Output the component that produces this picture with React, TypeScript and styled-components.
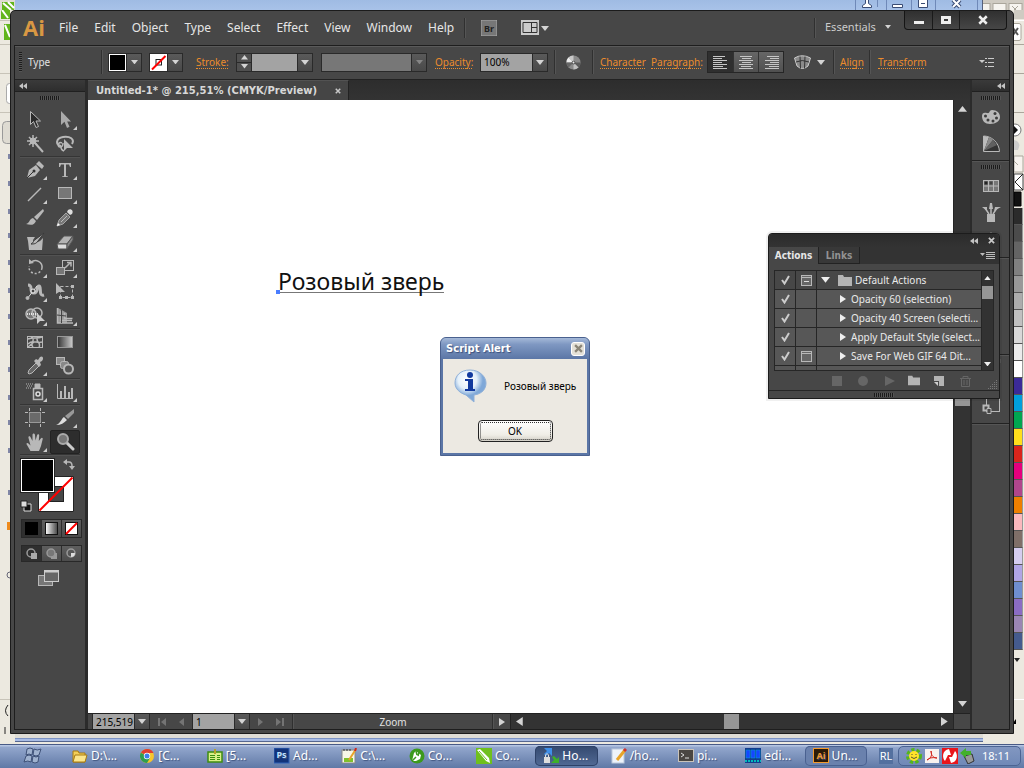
import React from "react";
import styled, { createGlobalStyle, css } from "styled-components";

const GlobalStyle = createGlobalStyle`
  *, *::before, *::after { box-sizing: border-box; }
  html, body { margin: 0; padding: 0; }
  body { font-family: "Noto Sans", sans-serif; font-size: 10px; line-height: 14px; overflow: hidden; background: #ece9e0; }
  button, input { font-family: inherit; font-size: inherit; line-height: inherit; margin: 0; padding: 0; border: 0; border-radius: 0; background: none; color: inherit; outline: none; }
  svg { display: block; flex: none; }
  ul { list-style: none; margin: 0; padding: 0; }
  a { color: inherit; text-decoration: none; }
`;

/* ---------- desktop ---------- */

const Desktop = styled.div`
  position: relative;
  display: flex;
  flex-direction: column;
  min-height: 100vh;
  background: #ece9e0;
`;

const RearTitle = styled.div`
  display: flex;
  height: 10px;
  background: linear-gradient(#9fbbe3, #a8c2e8);
`;
const RearLogo = styled.div`
  width: 15px;
  background: #dedbd2;
`;
const RearButtons = styled.div`
  display: flex;
  margin-left: auto;
  height: 10px;
`;
const RearSide = styled.div`
  width: 42px;
  background: #cfcbc2;
  border-left: 1px solid #55617c;
`;

const Middle = styled.main`
  display: flex;
  flex: 1;
  min-height: 0;
`;
const LeftStrip = styled.div`
  width: 10px;
  background: #ece9e0;
  overflow: hidden;
`;
const RightStrip = styled.div`
  width: 10px;
  background: #ece9e0;
  overflow: hidden;
`;
const Swatch = styled.div<{ $c: string }>`
  height: 17px;
  width: 9px;
  background: ${(p) => p.$c};
  border-bottom: 1px solid #555;
  border-right: 1px solid #999;
`;

const RearBottom = styled.div`
  height: 10px;
  margin: 0 41px 0 15px;
  background: linear-gradient(#dedcd5 0 4px, #7c93c4 4px 5px, #a9bde6 5px 7px, #56678f 7px 8px, #ece9e0 8px);
`;

/* ---------- illustrator window ---------- */

const AppWindow = styled.section`
  flex: 1;
  min-width: 0;
  display: flex;
  flex-direction: column;
  background: #474747;
  border: 1px solid #1b1b1b;
  border-radius: 5px 5px 0 0;
  color: #e2e2e2;
`;

const MenuBar = styled.header`
  display: flex;
  align-items: flex-start;
  height: 34px;
  padding-left: 12px;
`;
const Logo = styled.h1`
  margin: 0;
  width: 32px;
  padding-top: 3px;
  font: bold 22px/26px "Open Sans", sans-serif;
  color: #d99843;
`;
const Menus = styled.nav`
  display: flex;
  flex: none;
  gap: 16px;
  width: 409px;
  padding: 8px 0 0 4px;
  font-size: 12px;
  line-height: 18px;
`;
const MenuItem = styled.button`
  color: #e6e6e6;
  white-space: nowrap;
`;
const VLine = styled.span<{ $h?: number }>`
  display: block;
  flex: none;
  width: 2px;
  height: ${(p) => p.$h ?? 24}px;
  border-left: 1px solid #303030;
  border-right: 1px solid #555;
`;
const MenuRule = styled.span`
  padding: 7px 15px 0 0;
  &:first-child { padding-right: 0; }
`;
const BarIcons = styled.div`
  display: flex;
  align-items: center;
  gap: 24px;
  height: 20px;
  margin-top: 7px;
`;
const ArrangeButton = styled.button`
  display: flex;
  align-items: center;
  gap: 2px;
`;
const MenuEnd = styled.div`
  display: flex;
  align-items: flex-start;
  margin-left: auto;
  padding-right: 6px;
`;
const Workspace = styled.button`
  display: flex;
  align-items: center;
  gap: 9px;
  width: 88px;
  padding: 8px 0 0 9px;
  font-size: 11px;
  line-height: 16px;
  color: #ccc;
`;
const Caption = styled.div`
  display: flex;
  border: 1px solid #151515;
  border-top: 0;
  border-radius: 0 0 4px 4px;
  background: linear-gradient(#303030, #464646);
`;
const CaptionButton = styled.button<{ $w: number }>`
  display: grid;
  place-items: center;
  width: ${(p) => p.$w}px;
  height: 18px;
  & + & { border-left: 1px solid #1a1a1a; }
`;

const Frame = styled.div`
  flex: 1;
  min-height: 0;
  display: flex;
  flex-direction: column;
  margin: 0 3px 3px;
  border: 1px solid #1e1e1e;
`;

const ControlBar = styled.div`
  display: flex;
  align-items: center;
  height: 34px;
  padding-bottom: 2px;
  border-top: 1px solid #5a5a5a;
  border-bottom: 1px solid #222;
  white-space: nowrap;
`;
const Section = styled.div<{ $w: number; $gap?: number; $pad?: number }>`
  display: flex;
  flex: none;
  align-items: center;
  gap: ${(p) => p.$gap ?? 8}px;
  width: ${(p) => p.$w}px;
  padding-left: ${(p) => p.$pad ?? 7}px;
`;
const GripV = styled.span`
  width: 3px;
  height: 20px;
  background: repeating-linear-gradient(#1d1d1d 0 1px, #555 1px 2px);
`;
const GripH = styled.span`
  display: block;
  flex: none;
  width: 20px;
  height: 4px;
  margin: 0 auto;
  background: repeating-linear-gradient(90deg, #1b1b1b 0 1px, #555 1px 2px);
`;
const Orange = styled.a<{ $w: number }>`
  flex: none;
  width: ${(p) => p.$w}px;
  color: #ec8c2c;
  line-height: 12px;
  border-bottom: 1px dotted #ec8c2c;
`;
const Combo = styled.div<{ $w: number; $dim?: boolean }>`
  display: flex;
  flex: none;
  width: ${(p) => p.$w}px;
  height: 19px;
  border: 1px solid #2a2a2a;
  background: ${(p) => (p.$dim ? "#777" : "#a3a3a3")};
  color: #d4d4d4;
  input { flex: 1; min-width: 0; width: 0; padding-left: 3px; color: #000; }
`;
const DropButton = styled.button`
  display: grid;
  place-items: center;
  flex: none;
  width: 15px;
  background: linear-gradient(#5a5a5a, #494949);
  border-left: 1px solid #2a2a2a;
`;
const Stepper = styled.div`
  display: grid;
  flex: none;
  width: 15px;
  background: #505050;
  border-right: 1px solid #2a2a2a;
  button { display: grid; place-items: center; }
  button + button { border-top: 1px solid #2a2a2a; }
`;
const Wells = styled.div`
  display: flex;
  gap: 7px;
  margin-right: 5px;
`;
const ColorWell = styled.div`
  display: flex;
  height: 19px;
  width: 34px;
  border: 1px solid #2a2a2a;
  > svg { width: 17px; height: 17px; }
`;
const Aligns = styled.div`
  display: flex;
  flex: none;
  height: 22px;
  margin-right: 4px;
  border: 1px solid #262626;
`;
const AlignButton = styled.button<{ $on?: boolean }>`
  display: grid;
  place-items: center;
  width: 25px;
  background: ${(p) => (p.$on ? "#2f2f2f" : "linear-gradient(#666, #505050)")};
  & + & { border-left: 1px solid #333; }
`;
const ControlMenu = styled.button`
  margin: 0 15px 0 auto;
`;

const Body = styled.div`
  flex: 1;
  min-height: 0;
  display: flex;
  background: #2b2b2b;
`;
const SidePanel = styled.aside<{ $w: number }>`
  display: flex;
  flex: none;
  flex-direction: column;
  width: ${(p) => p.$w}px;
  background: #474747;
`;
const PanelHeader = styled.div<{ $end?: boolean }>`
  display: flex;
  flex: none;
  align-items: center;
  justify-content: ${(p) => (p.$end ? "flex-end" : "flex-start")};
  height: 12px;
  padding: 0 4px;
  background: linear-gradient(#3a3a3a, #2e2e2e);
  border-bottom: 1px solid #202020;
`;

/* ---------- tools ---------- */

const GripArea = styled.div`
  height: 15px;
  padding-top: 4px;
`;
const ToolGroup = styled.div`
  display: grid;
  grid-template-columns: 30px 30px;
  margin-left: 5px;
  width: 60px;
  padding-top: 1px;
  border-bottom: 1px solid #353535;
  box-shadow: 0 1px 0 #525252;
`;
const ToolButton = styled.button<{ $on?: boolean; $more?: boolean }>`
  position: relative;
  display: grid;
  place-items: center;
  height: 24px;
  ${(p) => p.$on && css`background: #2d2d2d; border: 1px solid #232323; border-radius: 2px;`}
  ${(p) => p.$more && css`
    &::after {
      content: "";
      position: absolute;
      right: 3px;
      bottom: 2px;
      border: 2px solid transparent;
      border-right-color: #ccc;
      border-bottom-color: #ccc;
    }
  `}
`;
const Paint = styled.div`
  position: relative;
  width: 60px;
  height: 64px;
  margin-left: 5px;
`;
const PaintPart = styled.button<{ $x: number; $y: number }>`
  position: absolute;
  left: ${(p) => p.$x}px;
  top: ${(p) => p.$y}px;
`;
const Modes = styled.div<{ $h: number }>`
  display: flex;
  width: 61px;
  height: ${(p) => p.$h}px;
  margin: 0 0 7px 6px;
  border: 1px solid #282828;
`;
const ModeButton = styled.button<{ $on?: boolean }>`
  display: grid;
  place-items: center;
  flex: 1;
  background: ${(p) => (p.$on ? "#2f2f2f" : "linear-gradient(#5e5e5e, #4c4c4c)")};
  & + & { border-left: 1px solid #2c2c2c; }
`;
const ScreenMode = styled.button`
  width: 22px;
  margin: 1px auto 0 23px;
`;

/* ---------- document ---------- */

const DocumentPane = styled.div`
  flex: 1;
  min-width: 0;
  display: flex;
  flex-direction: column;
  margin: 0 2px 0 3px;
`;
const TabBar = styled.div`
  display: flex;
  flex: none;
  height: 20px;
  background: linear-gradient(#2d2d2d, #333);
`;
const DocTab = styled.div`
  display: flex;
  align-items: center;
  justify-content: space-between;
  width: 261px;
  padding: 0 7px 0 8px;
  background: #454545;
  border-right: 1px solid #222;
  border-top: 1px solid #525252;
  font: bold 10px/16px "DejaVu Sans", sans-serif;
  color: #d8d8d8;
  white-space: nowrap;
`;
const Stage = styled.div`
  flex: 1;
  min-height: 0;
  display: flex;
`;
const Artboard = styled.div`
  position: relative;
  flex: 1;
  background: #fff;
`;
const ArtText = styled.span`
  position: absolute;
  left: 190px;
  top: 171px;
  font-size: 23px;
  line-height: 21px;
  color: #111;
  border-bottom: 1px solid #777;
  white-space: nowrap;
  &::before {
    content: "";
    position: absolute;
    left: -2px;
    bottom: -2px;
    width: 4px;
    height: 4px;
    background: #4a7dff;
  }
`;
const VScroll = styled.div`
  display: flex;
  flex-direction: column;
  align-items: center;
  width: 17px;
  padding: 6px 0;
  background: #333;
  border-left: 1px solid #262626;
`;
const VThumb = styled.span`
  width: 15px;
  height: 28px;
  margin: 266px 0 auto;
  background: #969696;
`;
const StatusBar = styled.div`
  display: flex;
  flex: none;
  align-items: center;
  height: 16px;
  border-top: 1px solid #222;
  background: #474747;
`;
const StatusLead = styled.span`
  width: 4px;
`;
const StatusCombo = styled(Combo)`
  height: 15px;
  border-top: 0;
  border-bottom: 0;
`;
const NavButtons = styled.div<{ $w: number }>`
  display: flex;
  flex: none;
  align-items: center;
  justify-content: center;
  gap: 12px;
  width: ${(p) => p.$w}px;
  color: #747474;
`;
const NavButton = styled.button`
  display: block;
`;
const StatusText = styled.span`
  flex: none;
  width: 198px;
  text-align: center;
`;
const HScroll = styled.div`
  display: flex;
  flex: 1;
  align-items: center;
  height: 15px;
  padding: 0 5px;
  background: #333;
  border-left: 1px solid #222;
`;
const HThumb = styled.span`
  width: 15px;
  height: 15px;
  margin: 0 auto 0 201px;
  background: #969696;
`;
const Corner = styled.span`
  width: 17px;
  height: 15px;
  border-left: 1px solid #262626;
`;

/* ---------- dock ---------- */

const DockGroup = styled.div<{ $h: number }>`
  display: flex;
  flex: none;
  flex-direction: column;
  align-items: center;
  height: ${(p) => p.$h}px;
  padding-top: 4px;
  border-bottom: 1px solid #222;
  box-shadow: 0 1px 0 #555;
  overflow: hidden;
`;
const DockSpace = styled.span`
  flex: none;
  height: 3px;
`;
const DockButton = styled.button`
  display: grid;
  flex: none;
  place-items: center;
  height: 27px;
`;

/* ---------- actions panel ---------- */

const ActionsPanel = styled.section`
  position: absolute;
  right: 24px;
  top: 233px;
  width: 232px;
  display: flex;
  flex-direction: column;
  background: #474747;
  border: 1px solid #1c1c1c;
  border-radius: 4px 4px 0 0;
  box-shadow: 0 0 0 2px rgba(0, 0, 0, 0.06);
  color: #eaeaea;
`;
const ActionsTop = styled.div`
  display: flex;
  align-items: center;
  justify-content: flex-end;
  gap: 10px;
  height: 13px;
  padding-right: 4px;
  background: linear-gradient(#2b2b2b, #333);
  border-radius: 4px 4px 0 0;
`;
const ActionsTabs = styled.div`
  display: flex;
  align-items: center;
  height: 17px;
  padding-right: 4px;
  background: #333;
`;
const PanelTab = styled.button<{ $on?: boolean; $w: number }>`
  height: 17px;
  width: ${(p) => p.$w}px;
  font: bold 10px/16px "DejaVu Sans Condensed", "Noto Sans", sans-serif;
  background: ${(p) => (p.$on ? "#474747" : "#383838")};
  color: ${(p) => (p.$on ? "#e6e6e6" : "#929292")};
  border-right: 1px solid #222;
  box-shadow: ${(p) => (p.$on ? "none" : "inset 0 -1px 0 #222")};
`;
const ActionsMenu = styled.button`
  margin-left: auto;
`;
const ActionsBody = styled.div`
  display: flex;
  height: 101px;
  margin: 6px 5px 0;
  border: 1px solid #262626;
`;
const ActionsList = styled.ul`
  flex: 1;
  min-width: 0;
  overflow: hidden;
`;
const ActionRow = styled.li<{ $head?: boolean }>`
  display: grid;
  grid-template-columns: 21px 21px 1fr;
  height: 19px;
  background: ${(p) => (p.$head ? "#474747" : "#575757")};
  border-bottom: 1px solid #262626;
`;
const Cell = styled.span`
  display: grid;
  place-items: center;
  border-right: 1px solid #262626;
`;
const ActionName = styled.span<{ $head?: boolean }>`
  display: flex;
  align-items: center;
  gap: ${(p) => (p.$head ? 3 : 5)}px;
  padding-left: ${(p) => (p.$head ? 4 : 23)}px;
  white-space: nowrap;
  svg:first-child { margin-right: ${(p) => (p.$head ? 5 : 0)}px; }
`;
const ActionsScroll = styled.div`
  display: flex;
  flex: none;
  flex-direction: column;
  align-items: center;
  width: 12px;
  padding: 5px 0 4px;
  background: #323232;
  border-left: 1px solid #262626;
`;
const ActionsThumb = styled.span`
  width: 11px;
  height: 13px;
  margin: 6px 0 auto;
  background: #969696;
`;
const ActionsFoot = styled.div`
  display: flex;
  align-items: center;
  justify-content: flex-end;
  gap: 12px;
  height: 19px;
  padding-right: 1px;
  button { display: block; }
  > svg { margin-left: 4px; align-self: flex-end; }
`;
const ActionsGrip = styled.div`
  height: 8px;
  padding-top: 2px;
  border-top: 1px solid #262626;
`;

/* ---------- alert ---------- */

const Alert = styled.div`
  position: absolute;
  left: 440px;
  top: 337px;
  width: 150px;
  padding: 0 2px 2px;
  background: #5b76a6;
  border: 1px solid #4a618f;
  border-radius: 6px 6px 0 0;
`;
const AlertTitle = styled.div`
  display: flex;
  align-items: center;
  justify-content: space-between;
  height: 21px;
  margin: 0 -2px;
  padding: 0 4px 0 5px;
  border-radius: 5px 5px 0 0;
  background: linear-gradient(#a5b9d8, #7f98c2 30%, #5b76a6);
  color: #fff;
  font: bold 10px/16px "DejaVu Sans", sans-serif;
  text-shadow: 1px 1px 1px #3b507c;
`;
const AlertClose = styled.button`
  display: grid;
  place-items: center;
  width: 14px;
  height: 14px;
  border: 1px solid #fff;
  border-radius: 3px;
  background: #e4e1d8;
`;
const AlertBody = styled.div`
  display: flex;
  flex-direction: column;
  align-items: center;
  height: 94px;
  padding-top: 9px;
  background: #ece9e2;
  color: #000;
`;
const AlertMessage = styled.div`
  display: flex;
  align-items: center;
  gap: 17px;
  width: 126px;
  margin-left: 4px;
  height: 36px;
  white-space: nowrap;
`;
const OkButton = styled.button`
  width: 75px;
  height: 22px;
  margin-top: 16px;
  border: 1px solid #222;
  border-radius: 4px;
  outline: 1px dotted #333;
  outline-offset: -3px;
  background: linear-gradient(#fff, #efede6 70%, #d2cfc6);
  color: #000;
`;

/* ---------- taskbar ---------- */

const Taskbar = styled.footer`
  display: flex;
  flex: none;
  align-items: center;
  height: 24px;
  background: linear-gradient(#485a86 0 1px, #b5c5e2 1px 2px, #93a7cd 3px, #6079a6);
  color: #fff;
  font-size: 12px;
  line-height: 18px;
`;
const Start = styled.button`
  width: 64px;
  padding-left: 23px;
`;
const Tasks = styled.div`
  display: flex;
  flex: 1;
  min-width: 0;
`;
const Task = styled.button<{ $on?: boolean; $soft?: boolean }>`
  display: flex;
  flex: 1;
  align-items: center;
  gap: 3px;
  height: 20px;
  margin-right: 5px;
  padding-left: 8px;
  border-radius: 5px;
  white-space: nowrap;
  text-shadow: 1px 1px 1px #41557f;
  ${(p) => p.$on && css`background: linear-gradient(#34496f, #526a95); box-shadow: inset 0 0 0 1px #2e4268;`}
  ${(p) => p.$soft && css`background: #6a81ad; box-shadow: inset 0 0 0 1px #4a6190;`}
`;
const Lang = styled.span`
  width: 14px;
  height: 16px;
  margin: 0 5px 0 7px;
  background: #54709f;
  font-size: 11px;
  line-height: 16px;
  text-align: center;
`;
const Tray = styled.div`
  display: flex;
  align-items: center;
  gap: 2px;
  width: 123px;
  height: 20px;
  margin-right: 3px;
  padding-left: 7px;
  border: 1px solid #4c6493;
  border-radius: 5px;
  background: linear-gradient(#8297c1, #7089b7);
  font-size: 11px;
  time { margin-left: 4px; }
`;

/* ---------- glyphs ---------- */

type Dir = "up" | "down" | "left" | "right";
const points: Record<Dir, string> = {
  down: "0,0 8,0 4,5",
  up: "0,5 8,5 4,0",
  left: "6,0 6,8 0,4",
  right: "0,0 0,8 6,4",
};
const Arrow = ({ dir = "down", size = 8, fill = "#d4d4d4" }: { dir?: Dir; size?: number; fill?: string }) => {
  const vertical = dir === "up" || dir === "down";
  const w = vertical ? size : (size * 6) / 8;
  const h = vertical ? (size * 5) / 8 : size;
  return (
    <svg width={w} height={h} viewBox={vertical ? "0 0 8 5" : "0 0 6 8"}>
      <polygon points={points[dir]} fill={fill} />
    </svg>
  );
};

const Collapse = () => (
  <svg width="8" height="6" viewBox="0 0 8 6" fill="#c4c4c4"><path d="M4 0v6L0 3zM8 0v6L4 3z" /></svg>
);
const Cross = ({ color = "#c8c8c8", size = 7 }: { color?: string; size?: number }) => (
  <svg width={size} height={size} viewBox="0 0 8 8"><path d="M1 1l6 6M7 1l-6 6" stroke={color} strokeWidth="2" /></svg>
);
const PanelMenu = () => (
  <svg width="15" height="9" viewBox="0 0 15 9"><path d="M0 2h5L2.500 5z" fill="#bbb" /><path d="M6 1.500h9M6 3.500h9M6 5.500h9M6 7.500h9" stroke="#bbb" /></svg>
);

const L = "#b8b8b8";
const toolArt: Record<string, React.ReactNode> = {
  select: <path d="M5.500 1.500v13l3-3 2.500 6 2.500-1-2.500-5.500h4.500z" fill="#2b2b2b" stroke={L} />,
  direct: <path d="M6 1v14l3.500-3.200L12 18l2.500-1.200-2.300-5.300H16z" fill="#aaa" />,
  wand: <g stroke={L}><path d="M10 9l8 9" strokeWidth="2" /><path d="M8 1v12M2 7h12M4 3l8 8M12 3l-8 8" strokeWidth="1.500" /><circle cx="8" cy="7" r="3" fill={L} /></g>,
  lasso: <g fill="none" stroke={L} strokeWidth="2"><path d="M6 12C0 11 1 4 8 3s12 2 9 7" /><path d="M7 9c-4-2-5 4-2 4s3-4 3-4M6 13q0 3 3 4" strokeWidth="1.500" /><path d="M9 5v12l3-3h6z" fill={L} stroke="none" /></g>,
  pen: <g><path d="M2 18l2-8 7-5 4 5-5 6z" fill={L} /><path d="M11 4l3-3 5 5-2 3z" fill={L} /><path d="M2 18l6-6" stroke="#333" /><circle cx="9" cy="11" r="1.500" fill="#333" /></g>,
  type: <path d="M4 3h12v4h-1l-1-2.500h-3V16l2 .5V17H7v-.5l2-.5V4.500H6L5 7H4z" fill={L} />,
  line: <path d="M3 17L16 4" stroke={L} strokeWidth="1.500" />,
  rect: <rect x="3.500" y="3.500" width="13" height="11" fill="#777" stroke={L} />,
  brush: <g fill={L}><path d="M18 1L9 9l3 3 7-9z" /><path d="M8 10l3 3c-2 5-6 4-10 3 4-1 3-5 7-6z" /></g>,
  pencil: <g><path d="M2 18l2-6 7-7 4 4-7 7z" fill="#777" stroke="#a5a5a5" /><path d="M12 4l1-2c3-2 6 1 4 4l-2 1z" fill="#ddd" /><path d="M2 18l1-3 2 2z" fill="#fff" /><path d="M6 14l6-6" stroke="#bbb" /></g>,
  blob: <g fill={L}><path d="M2 5h8l-2 3c0 3 4 3 7 1l3-3-1 12H4L3 9z" /><path d="M19 1l-6 8c-2 3-4 3-7 3 3-1 2-4 5-5z" stroke="#3a3a3a" /></g>,
  eraser: <g stroke="#555"><path d="M2 12l7-8h9l-6 8z" fill="#b4b4b4" /><path d="M2 12h10v5H3z" fill="#ddd" /><path d="M12 12l6-8v4l-6 9z" fill="#858585" /></g>,
  rotate: <g fill="none" stroke={L}><path d="M6 4.500A6.500 6.500 0 0 1 17 10" strokeWidth="1.500" /><path d="M17 10A6.500 6.500 0 1 1 4 8" strokeDasharray="2 2" strokeWidth="1.500" /><path d="M4 6V1l5 4z" fill={L} stroke="none" /></g>,
  scale: <g fill="none" stroke={L}><rect x="7.500" y="2.500" width="11" height="10" /><rect x="1.500" y="9.500" width="8" height="7" fill="#777" /><path d="M10 10l6-6M12 4.500h4v4" strokeWidth="1.500" /></g>,
  width: <g fill="none" stroke={L}><path d="M3 3c6 0 0 8 6 8 5 0 2-7 5-7s-1 11 5 9" strokeWidth="3" /><path d="M2 17L12 4" stroke="#ddd" /><circle cx="8" cy="9" r="2" fill="#444" stroke="#eee" /><circle cx="2.500" cy="16" r="1.500" fill={L} /></g>,
  transform: <g fill={L}><rect x="5.500" y="4.500" width="12" height="11" fill="none" stroke={L} strokeDasharray="3 2" /><path d="M1 1v11l3-2h6zM4 14h3v3H4zM16 3h3v3h-3zM16 14h3v3h-3zM10 14h3v3h-3z" /></g>,
  shape: <g fill="#777" stroke={L} strokeWidth="1.500"><circle cx="6" cy="8" r="5" /><circle cx="12" cy="7" r="5" fill="none" /><path d="M2 8h12" stroke="#fff" strokeDasharray="1 1" /><path d="M12 7v11l3-3h5z" fill="#ccc" stroke="none" /></g>,
  perspective: <g fill="none" stroke={L}><path d="M3 2l9 5v10H3z" fill="#999" stroke="none" /><path d="M2.500 2v15H18M6 5v9.500h11M9.500 7v5.500h8" strokeWidth="1.500" /><path d="M6.500 4v13M2 9l9 1" stroke="#444" /></g>,
  mesh: <g fill="none" stroke={L}><rect x="2.500" y="4.500" width="15" height="11" /><path d="M3 7c5-2 9 0 14-2M3 12c5-5 9 0 14-2M6 5c6 3-2 6 2 10M13 5c-4 4 4 6 1 10M3 15l6-5" strokeWidth="1.500" /></g>,
  gradient: <g><defs><linearGradient id="gr"><stop stopColor="#333" /><stop offset="1" stopColor="#ccc" /></linearGradient></defs><rect x="2.500" y="4.500" width="15" height="11" fill="url(#gr)" stroke="#999" /></g>,
  dropper: <g><path d="M3 17l1-3 7-7 3 3-7 7-3 1z" fill="#666" stroke={L} /><path d="M9 5l2-2 2 1 2-3c3-2 4 2 2 4l-2 1 1 3-2 2z" fill={L} /></g>,
  blend: <g fill="#888" stroke={L}><rect x="1.500" y="1.500" width="8" height="7" /><rect x="5.500" y="5.500" width="8" height="7" rx="2" /><circle cx="13.500" cy="13" r="4.500" fill="#555" strokeWidth="2" /></g>,
  spray: <g fill="none" stroke={L}><path d="M1 2h7M2 4h6M1 6h5" strokeDasharray="1 1" /><rect x="8.500" y="6.500" width="9" height="11" fill="#4a4a4a" strokeWidth="1.500" /><path d="M10 2h5v4h-5z" fill={L} /><circle cx="13" cy="12" r="2" stroke="#ddd" strokeWidth="1.500" /></g>,
  graph: <g stroke={L}><path d="M2.500 2v14.500H18" fill="none" /><path d="M6 16V9M10 16V4M14 16V10M17 16V6" strokeWidth="2" /></g>,
  artboard: <g stroke={L}><rect x="4.500" y="4.500" width="11" height="10" fill="#6a6a6a" stroke="#999" /><path d="M4.500 0v3M15.500 0v3M4.500 16v3M15.500 16v3M0 4.500h3M0 14.500h3M17 4.500h3M17 14.500h3" /></g>,
  slice: <g><path d="M10 8l9-7v4l-6 6z" fill="#999" /><path d="M1 17c5-2 5-6 8-8l3 3c-3 3-6 5-11 5z" fill="#ddd" /></g>,
  hand: <path d="M5.500 19L2 13c-1.500-2 .5-3 2-1l1.500 1.500L3.500 6c-.5-2 1.500-2.500 2.200-.5L7.500 9V3c0-2 2.300-2 2.500 0l.5 5.500L12 3.500c.5-2 2.300-1.500 2.200 0L13.800 9l2-2.500c1-1.500 2.500-.5 1.800 1L16 14l-2 5z" fill={L} />,
  zoom: <g><path d="M12 11l6 6" stroke="#ccc" strokeWidth="3" strokeLinecap="round" /><circle cx="8" cy="7" r="5" fill="#777" stroke="#aaa" strokeWidth="2" /></g>,
};

const groups: [string, string, boolean][][] = [
  [["select", "Selection", false], ["direct", "Direct Selection", true], ["wand", "Magic Wand", false], ["lasso", "Lasso", false]],
  [["pen", "Pen", true], ["type", "Type", true], ["line", "Line Segment", true], ["rect", "Rectangle", true], ["brush", "Paintbrush", false], ["pencil", "Pencil", true], ["blob", "Blob Brush", false], ["eraser", "Eraser", true]],
  [["rotate", "Rotate", true], ["scale", "Scale", true], ["width", "Width", true], ["transform", "Free Transform", false], ["shape", "Shape Builder", true], ["perspective", "Perspective Grid", true]],
  [["mesh", "Mesh", false], ["gradient", "Gradient", false], ["dropper", "Eyedropper", true], ["blend", "Blend", false]],
  [["spray", "Symbol Sprayer", true], ["graph", "Column Graph", true]],
  [["artboard", "Artboard", false], ["slice", "Slice", true], ["hand", "Hand", true], ["zoom", "Zoom", false]],
];

const NoneSwatch = ({ size = 16 }: { size?: number }) => (
  <svg width={size} height={size} viewBox="0 0 17 17">
    <rect width="17" height="17" fill="#fff" />
    <rect x="6" y="5.500" width="5.500" height="5.500" fill="#fff" stroke="#222" />
    <path d="M2 15.500L15.500 2" stroke="#f00" strokeWidth="2" />
  </svg>
);

function Tools() {
  return (
    <SidePanel $w={70}>
      <PanelHeader><Collapse /></PanelHeader>
      <GripArea><GripH /></GripArea>
      {groups.map((g, i) => (
        <ToolGroup key={i}>
          {g.map(([id, name, more]) => (
            <ToolButton key={id} aria-label={name} $more={more} $on={id === "zoom"}>
              <svg width="20" height="20" viewBox="0 0 20 20">{toolArt[id]}</svg>
            </ToolButton>
          ))}
        </ToolGroup>
      ))}
      <Paint>
        <PaintPart $x={18} $y={21} aria-label="Stroke colour">
          <svg width="36" height="36" viewBox="0 0 36 36">
            <path d="M.5.5h35v35H.5z" fill="#fff" stroke="#222" />
            <rect x="10.500" y="10.500" width="15" height="15" fill="#474747" stroke="#222" />
            <path d="M1.500 34.500l33-33" stroke="#f00" strokeWidth="2" />
          </svg>
        </PaintPart>
        <PaintPart $x={0} $y={3} aria-label="Fill colour">
          <svg width="35" height="35" viewBox="0 0 35 35">
            <rect x=".5" y=".5" width="34" height="34" fill="#fff" stroke="#222" />
            <rect x="2" y="2" width="31" height="31" fill="#000" />
          </svg>
        </PaintPart>
        <PaintPart $x={43} $y={4} aria-label="Swap fill and stroke">
          <svg width="12" height="11" viewBox="0 0 12 11"><path d="M3 3h3q3 0 3 4" fill="none" stroke={L} strokeWidth="1.500" /><path d="M4 0v6L0 3zM6 7h6l-3 4z" fill={L} /></svg>
        </PaintPart>
        <PaintPart $x={0} $y={45} aria-label="Default fill and stroke">
          <svg width="12" height="12" viewBox="0 0 12 12"><path d="M4 4h7v7H4z" fill="#111" stroke="#ddd" /><path d="M1 1h6v6H1z" fill="#ddd" stroke="#222" /></svg>
        </PaintPart>
      </Paint>
      <Modes $h={19}>
        <ModeButton $on aria-label="Colour"><svg width="13" height="13"><rect width="13" height="13" fill="#000" /></svg></ModeButton>
        <ModeButton aria-label="Gradient">
          <svg width="13" height="13"><defs><linearGradient id="mg"><stop stopColor="#fff" /><stop offset="1" stopColor="#444" /></linearGradient></defs><rect x=".5" y=".5" width="12" height="12" fill="url(#mg)" stroke="#111" /></svg>
        </ModeButton>
        <ModeButton aria-label="None">
          <svg width="13" height="13"><rect x=".5" y=".5" width="12" height="12" fill="#fff" stroke="#111" /><path d="M1 12L12 1" stroke="#f00" strokeWidth="2" /></svg>
        </ModeButton>
      </Modes>
      <Modes $h={17}>
        {["Draw Normal", "Draw Behind", "Draw Inside"].map((m, i) => (
          <ModeButton key={m} $on={i === 0} aria-label={m}>
            <svg width="12" height="12" viewBox="0 0 12 12">
              {i === 1 && <rect x="5" y="5" width="6" height="6" fill="#999" />}
              <circle cx="5" cy="5" r="4" fill={i === 1 ? "#777" : "none"} stroke="#999" strokeWidth="1.500" />
              {i === 0 && <rect x="5" y="5" width="6" height="6" fill="#aaa" />}
              {i === 2 && <path d="M5 5h4q0 4-4 4z" fill="#ddd" />}
            </svg>
          </ModeButton>
        ))}
      </Modes>
      <ScreenMode aria-label="Screen mode">
        <svg width="22" height="17" viewBox="0 0 22 17"><rect x=".5" y="5.500" width="14" height="10" fill="#777" stroke={L} /><rect x="6.500" y=".5" width="14" height="11" fill="#666" stroke="#ccc" /><path d="M6 1.500h15" stroke="#ccc" strokeWidth="2" /></svg>
      </ScreenMode>
    </SidePanel>
  );
}

const lineWidths = [12, 9, 14, 9, 14, 10, 14];

function Controls() {
  return (
    <ControlBar>
      <Section $w={86} $pad={4} $gap={6}><GripV /><span>Type</span></Section>
      <VLine />
      <Section $w={451} $pad={5}>
        <Wells>
          <ColorWell>
            <svg viewBox="0 0 17 17"><rect width="17" height="17" fill="#fff" /><rect x="1" y="1" width="15" height="15" fill="#000" /></svg>
            <DropButton aria-label="Fill"><Arrow size={7} /></DropButton>
          </ColorWell>
          <ColorWell><NoneSwatch size={17} /><DropButton aria-label="Stroke"><Arrow size={7} /></DropButton></ColorWell>
        </Wells>
        <Orange href="#stroke" $w={32}>Stroke:</Orange>
        <Combo $w={77}>
          <Stepper><button aria-label="Increase"><Arrow dir="up" size={7} /></button><button aria-label="Decrease"><Arrow size={7} /></button></Stepper>
          <input aria-label="Stroke weight" />
          <DropButton aria-label="Weights"><Arrow /></DropButton>
        </Combo>
        <Combo $w={106} $dim><input aria-label="Brush definition" disabled /><DropButton aria-label="Brushes" disabled><Arrow size={7} fill="#858585" /></DropButton></Combo>
        <Orange href="#opacity" $w={37}>Opacity:</Orange>
        <Combo $w={68}><input aria-label="Opacity" defaultValue="100%" /><DropButton aria-label="Opacity values"><Arrow /></DropButton></Combo>
      </Section>
      <VLine />
      <Section $w={36} $pad={10}>
        <svg width="15" height="15" viewBox="0 0 16 16">
          <circle cx="8" cy="8" r="7.500" fill="#8a8a8a" />
          <path d="M8 8L2.500 2.700A7.500 7.500 0 0 1 8 .5z" fill="#c8c8c8" />
          <path d="M8 8L.5 8A7.500 7.500 0 0 1 2.500 2.700z" fill="#eee" />
          <path d="M8 8h7.500a7.500 7.500 0 0 1-2.200 5.300z" fill="#5a5a5a" />
          <path d="M8 8v7.500a7.500 7.500 0 0 0 5.300-2.200z" fill="#c0c0c0" />
          <path d="M8 8L2.700 13.300A7.500 7.500 0 0 1 .5 8z" fill="#666" />
          <circle cx="8" cy="8" r="2" fill="#555" /><circle cx="8" cy="8" r="1" fill="#eee" />
        </svg>
      </Section>
      <VLine />
      <Section $w={239} $pad={6} $gap={6}>
        <Orange href="#character" $w={45}>Character</Orange>
        <Orange href="#paragraph" $w={50}>Paragraph:</Orange>
        <Aligns>
          {["Left", "Centre", "Right"].map((n, i) => (
            <AlignButton key={n} $on={i === 0} aria-label={`Align ${n}`}>
              <svg width="15" height="15" viewBox="0 0 15 15" stroke="#c6c6c6">
                {lineWidths.map((w, k) => {
                  const x = i === 0 ? 0 : i === 1 ? Math.floor((15 - w) / 2) : 15 - w;
                  return <path key={k} d={`M${x} ${k * 2 + 1.5}h${w}`} />;
                })}
              </svg>
            </AlignButton>
          ))}
        </Aligns>
        <svg width="17" height="15" viewBox="0 0 17 15"><path d="M.5 3Q8-1.500 16.500 3L14 11q-5.500 5-11 0z" fill="#8a8a8a" stroke="#ccc" /><path d="M2 7q6-3 13 0M6 1.500l.5 12M11 1.500l-.5 12" fill="none" stroke="#333" /></svg>
        <Arrow />
      </Section>
      <VLine />
      <Section $w={34} $pad={5}><Orange href="#align" $w={23}>Align</Orange></Section>
      <VLine />
      <Section $w={60} $pad={7}><Orange href="#transform" $w={46}>Transform</Orange></Section>
      <ControlMenu aria-label="Panel menu">
        <svg width="15" height="9" viewBox="0 0 15 9"><path d="M0 2h6L3 5z" fill="#ccc" /><path d="M6 .5h2M9 .5h6M6 4.500h2M9 4.500h6M6 8.500h2M9 8.500h6" stroke="#ccc" /></svg>
      </ControlMenu>
    </ControlBar>
  );
}

const dockArt: Record<string, React.ReactNode> = {
  Color: <g><path d="M1 9c0-3 2-4 5-3 3 1 2-3 5-3 5 0 8 3 8 7s-4 7-10 7c-5 0-8-3-8-8z" fill={L} /><g fill="#3c3c3c"><circle cx="4.500" cy="9" r="1.500" /><circle cx="7" cy="13" r="1.500" /><circle cx="12" cy="14" r="1.500" /><circle cx="15.500" cy="11" r="1.500" /><circle cx="14" cy="6.500" r="1.500" /></g></g>,
  Guide: <g><path d="M2.500 2v15.500h16C18 8 10 2 2.500 2z" fill="#333" stroke={L} /><path d="M3 17V2l5 1z" fill="#bbb" /><path d="M3 17L8 3l4 3z" fill="#8a8a8a" /><path d="M3 17l9-11 4 5z" fill="#606060" /></g>,
  Swatches: <g stroke={L}><rect x="2.500" y="4.500" width="15" height="11" fill="#777" /><path d="M7.500 4v12M12.500 4v12M2 10h16" /><path d="M3.500 5.500h3v3h-3z" fill="#222" stroke="none" /><path d="M8.500 5.500h3v3h-3z" fill="#444" stroke="none" /></g>,
  Brushes: <g><path d="M6 11h8v8H6z" fill={L} /><path d="M8 11L4 5M10 11V2M12 11l4-6" stroke={L} strokeWidth="1.500" /><path d="M1 4h5l0 4zM9 0h2l1 6H8zM13 8l1-4h6z" fill={L} /></g>,
  Symbols: <path d="M10 2l3 5 5 1-4 4 1 6-5-3-5 3 1-6-4-4 5-1z" fill={L} />,
  Artboards: <g fill="#474747" stroke={L}><rect x="5.500" y="1.500" width="13" height="13" /><path d="M2.500 8.500h5v5h-5z" strokeWidth="2" /><path d="M6 11.500h4v5H6z" /></g>,
};
const DockIcon = ({ id }: { id: string }) => (
  <DockButton aria-label={id}><svg width="20" height="20" viewBox="0 0 20 20">{dockArt[id]}</svg></DockButton>
);

const Check = () => (
  <svg width="9" height="10" viewBox="0 0 9 10"><path d="M1 5l2.500 3.500L8 1" fill="none" stroke="#ccc" strokeWidth="2" /></svg>
);
const DialogBox = ({ dash }: { dash?: boolean }) => (
  <svg width="11" height="11" viewBox="0 0 11 11"><rect x=".5" y=".5" width="10" height="10" fill="#666" stroke={L} /><path d="M0 2.500h11" stroke={L} />{dash && <path d="M3 6.500h5" stroke="#ddd" />}</svg>
);
const Folder = ({ w = 14 }: { w?: number }) => (
  <svg width={w} height="11" viewBox="0 0 14 11"><path d="M0 0h5l1 2h8v9H0z" fill="#b4b4b4" /></svg>
);

const actions: [string, boolean][] = [
  ["Opacity 60 (selection)", false],
  ["Opacity 40 Screen (selecti...", false],
  ["Apply Default Style (select...", false],
  ["Save For Web GIF 64 Dit...", true],
  ["", true],
];

function Actions() {
  return (
    <ActionsPanel>
      <ActionsTop><button aria-label="Collapse"><Collapse /></button><button aria-label="Close panel"><Cross /></button></ActionsTop>
      <ActionsTabs>
        <PanelTab $on $w={50}>Actions</PanelTab>
        <PanelTab $w={41}>Links</PanelTab>
        <ActionsMenu aria-label="Actions menu"><PanelMenu /></ActionsMenu>
      </ActionsTabs>
      <ActionsBody>
        <ActionsList>
          <ActionRow $head>
            <Cell><Check /></Cell><Cell><DialogBox dash /></Cell>
            <ActionName $head><Arrow size={9} fill="#eee" /><Folder />Default Actions</ActionName>
          </ActionRow>
          {actions.map(([t, box], i) => (
            <ActionRow key={i}>
              <Cell><Check /></Cell><Cell>{box && <DialogBox />}</Cell>
              <ActionName><Arrow dir="right" fill="#eee" />{t}</ActionName>
            </ActionRow>
          ))}
        </ActionsList>
        <ActionsScroll><Arrow dir="up" fill="#eee" size={7} /><ActionsThumb /><Arrow fill="#eee" size={7} /></ActionsScroll>
      </ActionsBody>
      <ActionsFoot>
        <button aria-label="Stop"><svg width="14" height="10"><rect x="2" width="10" height="10" fill="#666" /></svg></button>
        <button aria-label="Record"><svg width="14" height="10"><circle cx="7" cy="5" r="5" fill="#666" /></svg></button>
        <button aria-label="Play"><svg width="14" height="10"><path d="M3 0l10 5-10 5z" fill="#666" /></svg></button>
        <button aria-label="New set"><Folder w={12} /></button>
        <button aria-label="New action"><svg width="14" height="11"><path d="M2 1h10v10H7V6H2z" fill="#b4b4b4" /><path d="M2 7h4v4z" fill="#ccc" /></svg></button>
        <button aria-label="Delete"><svg width="14" height="12" fill="none" stroke="#666"><path d="M2 3.500h11M5 3V1.500h5V3M3.500 4v7.500h8V4M6 5v5M9 5v5" /></svg></button>
        <svg width="10" height="12" fill="#777"><path d="M8 2h1v1H8zM6 4h1v1H6zM8 4h1v1H8zM4 6h1v1H4zM6 6h1v1H6zM8 6h1v1H8zM2 8h1v1H2zM4 8h1v1H4zM6 8h1v1H6zM8 8h1v1H8zM0 10h1v1H0zM2 10h1v1H2zM4 10h1v1H4zM6 10h1v1H6zM8 10h1v1H8z" /></svg>
      </ActionsFoot>
      <ActionsGrip><GripH /></ActionsGrip>
    </ActionsPanel>
  );
}

const NotePad = () => <g><rect x="1" y="2" width="13" height="13" fill="#f7f7e8" stroke="#888" /><path d="M3 1v2M6 1v2M9 1v2" stroke="#333" /><path d="M3 10h9v4H3z" fill="#7fc02c" /><path d="M15 1L8 12" stroke="#e8a42a" strokeWidth="2" /><path d="M14 3l1-3" stroke="#c22" strokeWidth="2" /></g>;
const tasks: { t: string; art: React.ReactNode; on?: boolean; soft?: boolean }[] = [
  { t: "D:\\...", art: <g stroke="#a87a10"><path d="M1 3h5l1 2h6v9H1z" fill="#f3cf59" /><path d="M3 7h12l-2 7H1z" fill="#fce68c" /></g> },
  { t: "[C...", art: <g><circle cx="8" cy="8" r="7" fill="#f6c52c" /><path d="M8 8L2 4.500A7 7 0 0 1 14.500 5H8z" fill="#df3f32" /><path d="M8 8L1.800 4.700A7 7 0 0 0 8 15l3-5z" fill="#2f9e4f" /><circle cx="8" cy="8" r="3.200" fill="#fff" /><circle cx="8" cy="8" r="2.500" fill="#3f7fe8" /></g> },
  { t: "[5...", art: <g><rect x="1" y="4" width="14" height="10" fill="#d9f089" stroke="#3d8c12" strokeWidth="1.500" /><path d="M3 7.500h5M3 9.500h5M3 11.500h5M10 7.500h3M10 9.500h3M10 11.500h3" stroke="#3d8c12" /><path d="M8 1v5" stroke="#b8a02a" strokeWidth="2" /></g> },
  { t: "Ad...", art: <g><rect x="0" y="0" width="15" height="15" fill="#12337a" stroke="#2f62b8" /><text x="7.500" y="10" fontSize="9" fontWeight="bold" fill="#bfe0ff" textAnchor="middle">Ps</text></g> },
  { t: "C:\\...", art: <NotePad /> },
  { t: "Co...", art: <g><circle cx="8" cy="8" r="7.500" fill="#3c9a1c" /><path d="M3 13l2-8 2-2 5 4-1 4-4 2z" fill="#fff" /><path d="M7 3l1 4M10 4L9 8M3 13l4-4" stroke="#3c9a1c" strokeWidth="1.500" /></g> },
  { t: "Co...", art: <g><rect width="16" height="16" fill="#6fc01c" /><path d="M1 2l3-1 9 9 1 5-4-2z" fill="#fff" /><path d="M3 3l8 9" stroke="#6fc01c" /></g> },
  { t: "Ho...", on: true, art: <g><path d="M1 0h8v8L6 5 3 8 1 6l3-3z" fill="#3f8fe8" /><path d="M16 15H8l3-3-2-3 2-1 3 3 2-2z" fill="#3db02a" /><rect x="1" y="9" width="6" height="6" fill="#ddd" /><path d="M2.500 9V7q1.500-3 3 0v2" fill="none" stroke="#ddd" /></g> },
  { t: "/ho...", art: <g><rect x="1" y="1" width="12" height="14" fill="#eef3fa" stroke="#bbc9dc" /><path d="M14 2L6 12" stroke="#e8a42a" strokeWidth="3" /><path d="M15 1l-2 2" stroke="#c33" strokeWidth="3" /></g> },
  { t: "pi...", art: <g><rect x=".5" y="1.500" width="15" height="12" fill="#4a4642" stroke="#c9c3ba" /><path d="M3 5l3 2-3 2M7 10h4" fill="none" stroke="#ddd" /></g> },
  { t: "edi...", art: <g><rect width="16" height="15" fill="#123c8e" /><path d="M1 2h4v8H1zM6 2h4v8H6zM11 2h4v8h-4z" fill="#1646ff" stroke="#0ac" strokeWidth=".5" /><path d="M0 13h16" stroke="#0bb" strokeDasharray="2 1" strokeWidth="2" /></g> },
  { t: "Un...", soft: true, art: <g><rect x=".5" y=".5" width="15" height="14" fill="#2b1a08" stroke="#f29a2e" /><text x="8" y="11" fontSize="9" fontWeight="bold" fill="#f29a2e" textAnchor="middle">Ai</text></g> },
];

const leftMarks = [154, 181, 209, 233, 260, 288, 314, 340, 367, 395, 420, 448, 490];
const palette = ["#2b2b2b", "#4b4b4b", "#646464", "#808080", "#989898", "#acacac", "#c0c0c0", "#d8d8d8", "#ebebeb", "#fff", "#3b2a98", "#00a0dc", "#00a651", "#ffdf1c", "#d9251c", "#e5007d", "#b0468c", "#ee7f00", "#fbb8bd", "#7f6f68", "#d5cdf0", "#b0a5e5", "#6f8ed0", "#8a6cc4", "#9a86b4", "#455b8e"];

export default function App() {
  return (
    <Desktop>
      <GlobalStyle />
      <RearTitle>
        <RearLogo><svg width="15" height="10"><rect x="2" y="2" width="12" height="8" fill="#62b51c" /><path d="M3 3l8 7M8 2l6 6" stroke="#fff" strokeWidth="2" /></svg></RearLogo>
        <RearButtons>
          <svg width="128" height="10" fill="none" stroke="#3a4c74"><path d="M1.500 0v10M23.500 0v7M32.500 0v10M57.500 0v10M81.500 0v10M123.500 0v10" stroke="#6f89b8" /><path d="M8.500 7.500v-2l3-2v-4h3v4l3 2v2z" fill="#fff" /><path d="M38.500 4.500h10v3h-10z" fill="#fff" /><path d="M64.500-2v9.500h9V-2M67 3.500h4" fill="#fff" /><path d="M99 0l7 7M106 0l-7 7" stroke="#3a4c74" strokeWidth="4" /><path d="M99 0l7 7M106 0l-7 7" stroke="#fff" strokeWidth="2" /></svg>
        </RearButtons>
        <RearSide><svg width="41" height="10" fill="#f6f4ef" stroke="#aaa69b"><rect x="-4" y="3.500" width="11" height="12" /><rect x="10" y="3.500" width="13" height="12" /><rect x="26" y="3.500" width="13" height="12" /><path d="M29 6l6 6M35 6l-6 6" /></svg></RearSide>
      </RearTitle>
      <Middle>
        <LeftStrip>
          <svg width="10" height="724" viewBox="0 10 10 724" fill="none">
            <path d="M0 20.500h10M0 44.500h10M0 73.500h10M0 112.500h10M0 699.500h10" stroke="#c7c3b8" />
            <rect x="4" y="24" width="6" height="16" fill="#62b51c" /><path d="M5 25l5 12" stroke="#fff" strokeWidth="2" />
            <rect x="1" y="10" width="9" height="9" fill="#62b51c" /><path d="M2 10l6 8" stroke="#fff" strokeWidth="2" />
            <rect x="6.500" y="83.500" width="8" height="20" rx="3" fill="#fff" stroke="#aaa" />
            <rect x="2.500" y="121.500" width="12" height="22" rx="4" fill="#dedbd2" stroke="#999" />
            {leftMarks.map((y) => <path key={y} d={`M8 ${y}h2v5h-2z`} fill="#8086a6" />)}
            <path d="M7 522h3v8H7z" fill="#ee8a1c" />
            <circle cx="10" cy="575" r="3" stroke="#667" />
            <path d="M8 705q-5 6 0 11M5 727v8h5" stroke="#222" />
          </svg>
        </LeftStrip>
        <AppWindow>
          <MenuBar>
            <Logo>Ai</Logo>
            <Menus>
              {["File", "Edit", "Object", "Type", "Select", "Effect", "View", "Window", "Help"].map((m) => <MenuItem key={m}>{m}</MenuItem>)}
            </Menus>
            <MenuRule><VLine $h={20} /></MenuRule>
            <BarIcons>
              <button aria-label="Bridge"><svg width="16" height="16"><rect width="16" height="16" fill="#777" stroke="#aaa" /><text x="8" y="12" fontSize="9" fontWeight="bold" fill="#222" textAnchor="middle">Br</text></svg></button>
              <ArrangeButton aria-label="Arrange documents">
                <svg width="18" height="16"><rect x=".5" y=".5" width="17" height="14" fill="#ccc" stroke="#ccc" /><path d="M2 2.500h14v10H2zM10.500 2v11M11 7.500h5" fill="none" stroke="#333" /></svg>
                <Arrow />
              </ArrangeButton>
            </BarIcons>
            <MenuEnd>
              <MenuRule><VLine $h={20} /></MenuRule>
              <Workspace>Essentials<Arrow size={6} /></Workspace>
              <Caption>
                <CaptionButton $w={27} aria-label="Minimize"><svg width="10" height="10"><path d="M0 6h10v3H0z" fill="#eee" /></svg></CaptionButton>
                <CaptionButton $w={27} aria-label="Maximize"><svg width="10" height="10"><path d="M1.500 2.500h7v5h-7z" fill="none" stroke="#eee" strokeWidth="3" /></svg></CaptionButton>
                <CaptionButton $w={47} aria-label="Close"><Cross color="#eee" size={10} /></CaptionButton>
              </Caption>
            </MenuEnd>
          </MenuBar>
          <Frame>
            <Controls />
            <Body>
              <Tools />
              <DocumentPane>
                <TabBar><DocTab>Untitled-1* @ 215,51% (CMYK/Preview)<button aria-label="Close document"><Cross size={6} /></button></DocTab></TabBar>
                <Stage>
                  <Artboard><ArtText>Розовый зверь</ArtText></Artboard>
                  <VScroll><Arrow dir="up" size={9} /><VThumb /><Arrow size={9} /></VScroll>
                </Stage>
                <StatusBar>
                  <StatusLead />
                  <StatusCombo $w={58}><input aria-label="Zoom level" defaultValue="215,519" /><DropButton aria-label="Zoom levels"><Arrow /></DropButton></StatusCombo>
                  <NavButtons $w={42}>
                    <NavButton aria-label="First"><svg width="9" height="8" fill="currentColor"><path d="M0 0h2v8H0zM8 0v8L3 4z" /></svg></NavButton>
                    <NavButton aria-label="Previous"><svg width="5" height="8" fill="currentColor"><path d="M5 0v8L0 4z" /></svg></NavButton>
                  </NavButtons>
                  <StatusCombo $w={58}><input aria-label="Artboard number" defaultValue="1" /><DropButton aria-label="Artboards"><Arrow /></DropButton></StatusCombo>
                  <NavButtons $w={42}>
                    <NavButton aria-label="Next"><svg width="5" height="8" fill="currentColor"><path d="M0 0v8l5-4z" /></svg></NavButton>
                    <NavButton aria-label="Last"><svg width="9" height="8" fill="currentColor"><path d="M7 0h2v8H7zM1 0v8l5-4z" /></svg></NavButton>
                  </NavButtons>
                  <VLine $h={15} />
                  <StatusText>Zoom</StatusText>
                  <VLine $h={15} />
                  <NavButtons $w={16}><NavButton aria-label="Status menu"><Arrow dir="right" /></NavButton></NavButtons>
                  <HScroll><Arrow dir="left" size={9} /><HThumb /><Arrow dir="right" size={9} /></HScroll>
                  <Corner />
                </StatusBar>
              </DocumentPane>
              <SidePanel $w={37}>
                <PanelHeader $end><Collapse /></PanelHeader>
                <DockGroup $h={69}><GripH /><DockSpace /><DockIcon id="Color" /><DockIcon id="Guide" /></DockGroup>
                <DockGroup $h={97}><GripH /><DockSpace /><DockIcon id="Swatches" /><DockIcon id="Brushes" /><DockIcon id="Symbols" /></DockGroup>
                <DockGroup $h={97} />
                <DockGroup $h={69}><GripH /><DockSpace /><DockButton aria-label="Layers" /><DockIcon id="Artboards" /></DockGroup>
              </SidePanel>
            </Body>
          </Frame>
        </AppWindow>
        <RightStrip>
          <svg width="10" height="198" viewBox="0 10 10 198" fill="none" stroke="#aaa69b">
            <path d="M0 10h10v9H0z" fill="#cfcbc2" stroke="none" /><path d="M0 20.500h10" stroke="#fff" />
            <rect x="-6" y="23.500" width="13" height="17" rx="2" fill="#fff" /><path d="M-1 28l5 7M4 28l-5 7" stroke="#555" strokeWidth="2" />
            <path d="M0 44.500h10M0 73.500h10M0 112.500h10" /><circle cx="1" cy="130" r="6" fill="#fff" stroke="#777" /><path d="M0 126l4 4-4 4z" fill="#111" stroke="none" />
            <path d="M0 140q8 2 4 10H0z" fill="#ccc" stroke="none" /><path d="M0 156h9v16H0z" fill="#f7f3ee" /><path d="M0 161l4 4" />
            <path d="M0 174h9v16H0z" fill="#fff" stroke="#444" /><path d="M9 174l-8 8 8 8" stroke="#222" /><path d="M0 192h7v14H0z" fill="#111" stroke="#000" />
          </svg>
          {palette.map((c, i) => <Swatch key={i} $c={c} />)}
          <svg width="10" height="84" viewBox="0 0 10 84"><path d="M0 49.500h10" stroke="#fff" /><path d="M2 74v-5l-4 5z" fill="#000" /><path d="M0 8l3 4 3-4z" fill="#222" /></svg>
        </RightStrip>
      </Middle>
      <RearBottom />
      <Taskbar>
        <Start aria-label="Start"><svg width="20" height="18" viewBox="0 0 20 18" fill="#9fb2cf" stroke="#3f5278"><path d="M4 2q3-2 6 0L9 8q-3-2-6 0zM11 2q3 2 7 0l-2 6q-3 2-6 0zM3 9q3-2 6 0l-1 6q-3-2-7 0zM10 9q3 2 6 0l-1 6q-3 2-6 0z" /></svg></Start>
        <Tasks>
          {tasks.map((k, i) => (
            <Task key={i} $on={k.on} $soft={k.soft}><svg width="16" height="16" viewBox="0 0 16 16">{k.art}</svg>{k.t}</Task>
          ))}
        </Tasks>
        <Lang>RL</Lang>
        <Tray>
          <svg width="16" height="16" viewBox="0 0 16 16"><circle cx="8" cy="8" r="6" fill="none" stroke="#54b51c" strokeWidth="4" strokeDasharray="3 2" /><circle cx="8" cy="8" r="5" fill="#ffe32a" /><path d="M6 6v1M10 6v1M5 9q3 3 6 0" stroke="#553" fill="none" /></svg>
          <svg width="16" height="16" viewBox="0 0 16 16"><path d="M1 1h14v14H1z" fill="#f7f1ef" /><path d="M3 12c5-2 5-6 4-9 0 5 3 7 6 7-5-1-8 0-10 2z" fill="none" stroke="#d2231c" /></svg>
          <svg width="16" height="16" viewBox="0 0 16 16"><rect width="16" height="16" fill="#e8161c" /><path d="M7 1c-7 1-7 9-4 12l3-6h3zM9 15c7-1 7-9 4-12l-3 6H7z" fill="#fff" /></svg>
          <svg width="16" height="16" viewBox="0 0 16 16"><path d="M4 8l8-2 2 7-6 3z" fill="#999" stroke="#333" /><path d="M0 5l6-5v3h5v4H6v3z" fill="#43b02a" /></svg>
          <time>18:11</time>
        </Tray>
      </Taskbar>
      <Actions />
      <Alert role="dialog" aria-label="Script Alert">
        <AlertTitle>Script Alert<AlertClose aria-label="Close alert"><Cross color="#8a8578" size={9} /></AlertClose></AlertTitle>
        <AlertBody>
          <AlertMessage>
            <svg width="33" height="34" viewBox="0 0 33 34">
              <defs><radialGradient id="ib" cx=".4" cy=".3"><stop stopColor="#fff" /><stop offset=".6" stopColor="#e4f0fa" /><stop offset="1" stopColor="#7fa8d8" /></radialGradient></defs>
              <path d="M16 1C6 1 1 7 1 14c0 6 5 10 11 12l8 7v-7c8-1 12-6 12-12S26 1 16 1z" fill="url(#ib)" stroke="#8fb0d8" />
              <circle cx="16" cy="6" r="3" fill="#123a9e" /><path d="M11 10h8v10h2v2H11v-2h3v-8h-3z" fill="#123a9e" />
            </svg>
            Розовый зверь
          </AlertMessage>
          <OkButton>OK</OkButton>
        </AlertBody>
      </Alert>
    </Desktop>
  );
}
